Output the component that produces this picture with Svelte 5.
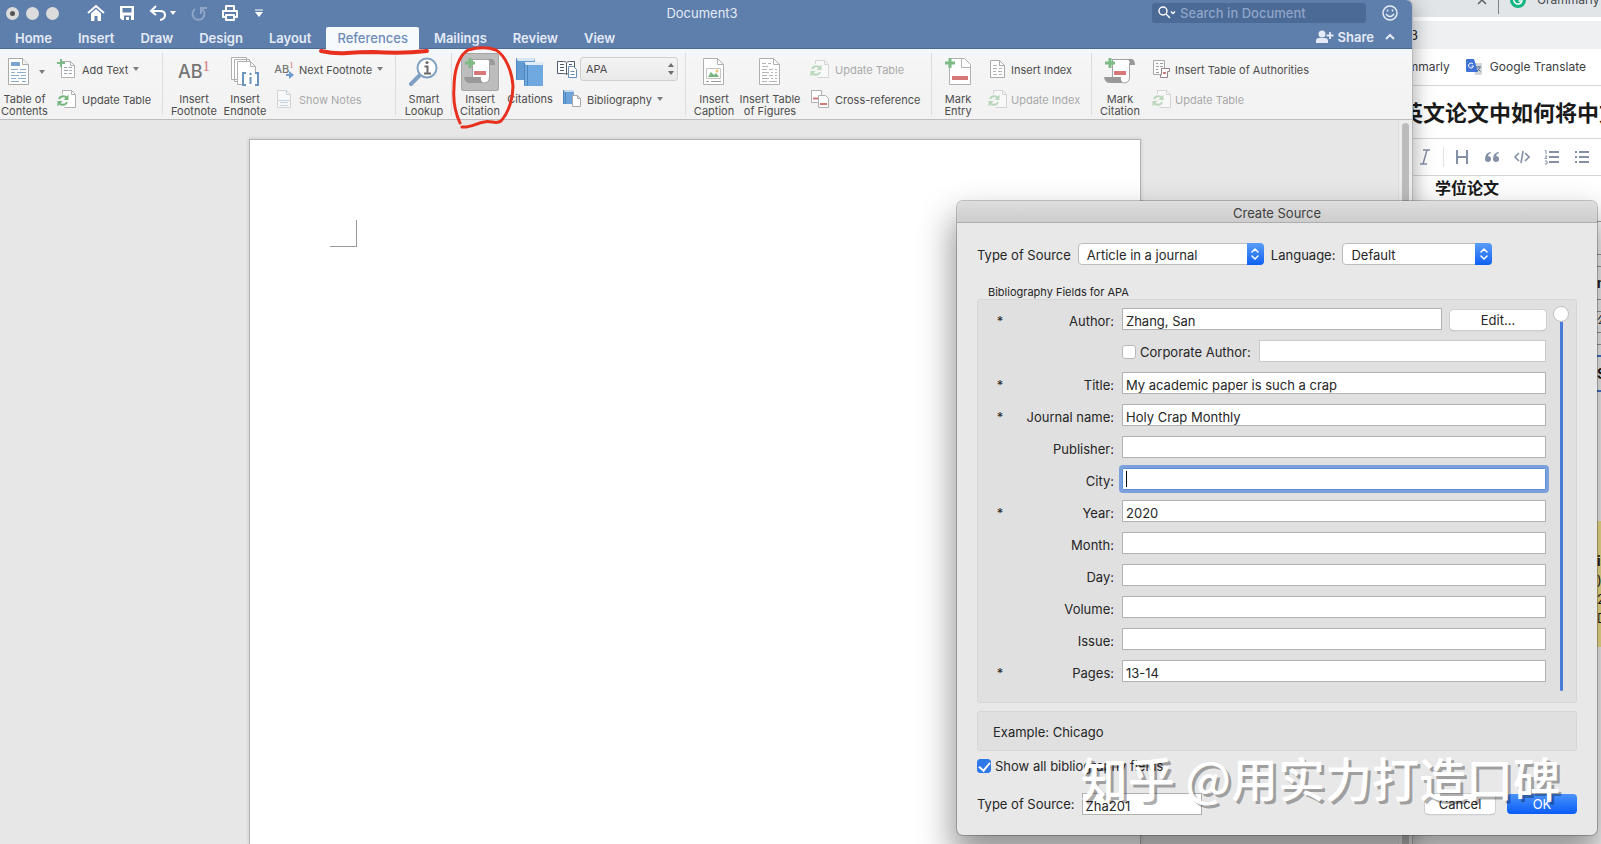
<script lang="ts">
  interface Field {
    id: string
    label: string
    value: string
    required?: boolean
    focused?: boolean
  }

  const tabs = ["Home", "Insert", "Draw", "Design", "Layout", "References", "Mailings", "Review", "View"]

  let activeTab = $state("References")
  let author = $state("Zhang, San")
  let corporate = $state(false)
  let corporateAuthor = $state("")
  let showAll = $state(true)
  let scroll = $state(0)
  let tag = $state("Zha201")

  let fields: Field[] = $state([
    { id: "title", label: "Title", value: "My academic paper is such a crap", required: true },
    { id: "journal", label: "Journal name", value: "Holy Crap Monthly", required: true },
    { id: "publisher", label: "Publisher", value: "" },
    { id: "city", label: "City", value: "", focused: true },
    { id: "year", label: "Year", value: "2020", required: true },
    { id: "month", label: "Month", value: "" },
    { id: "day", label: "Day", value: "" },
    { id: "volume", label: "Volume", value: "" },
    { id: "issue", label: "Issue", value: "" },
    { id: "pages", label: "Pages", value: "13-14", required: true },
  ])
</script>

{#snippet plus(x: number, y: number, s: number)}
  <path
    d="M{x + s} {y}v{s * 2}M{x} {y + s}h{s * 2}"
    fill="none" stroke="#7dbb85" stroke-width={s > 4 ? 3 : 2}
  />
{/snippet}

{#snippet icon(name: string)}
  {#if name === "toc"}
    <svg width="24" height="30" viewBox="0 0 24 30">
      <path d="M1.500 1.500h14l6 6v20h-20z" fill="#fff" stroke="#a9a9a9" />
      <path d="M15.500 1.500v6h6" fill="#f2f2f2" stroke="#a9a9a9" />
      <path d="M4 5h9v4H4z" fill="#79a5cf" />
      <path d="M4 12.500h7M13 12.500h6M4 15.500h4M10 15.500h9M4 18.500h8M14 18.500h5M4 21.500h5M11 21.500h8M4 24.500h8M15 24.500h4" stroke="#8badcb" />
    </svg>
  {:else if name === "addtext"}
    <svg width="20" height="22" viewBox="0 0 20 22">
      <path d="M4.500 3.500h9l4 4v12h-13z" fill="#fff" stroke="#b0b0b0" />
      <path d="M13.500 3.500v4h4" fill="none" stroke="#b0b0b0" />
      <path d="M7 9.500h3M11.500 9.500H15M7 12.500h4M12.500 12.500H15M7 15.500h3M11.500 15.500H15" stroke="#9ba3ab" />
      {@render plus(0, 1, 4)}
    </svg>
  {:else if name === "update"}
    <svg width="20" height="22" viewBox="0 0 20 22">
      <path d="M5.500 6V2.500h9l4 4v13h-11" fill="#fff" stroke="#b0b0b0" />
      <path d="M14.500 2.500v4h4" fill="none" stroke="#b0b0b0" />
      <path d="M2 11c1-3 6-4 8-1M10 14c-1 3-6 4-8 1" fill="none" stroke="#76b67e" stroke-width="2" />
      <path d="M11.500 6.500V12H6.500zM.500 18.500V13h5z" fill="#76b67e" />
    </svg>
  {:else if name === "endnote"}
    <svg width="30" height="30" viewBox="0 0 30 30">
      <path d="M1.500.500h15v22h-15zM4.500 2.500h15v22h-15z" fill="#fff" stroke="#b0b0b0" />
      <path d="M7.500 4.500h13l5 5v18h-18z" fill="#fff" stroke="#b0b0b0" />
      <path d="M20.500 4.500v5h5" fill="none" stroke="#b0b0b0" />
      <path d="M12 15h17v14H12z" fill="#fff" />
      <path d="M16 16h-3v12h3M25 16h3v12h-3M20.500 20v7" fill="none" stroke="#6b94bd" stroke-width="2" />
      <circle cx="20.500" cy="17" r="1.200" fill="#6b94bd" />
    </svg>
  {:else if name === "notes"}
    <svg width="20" height="22" viewBox="0 0 20 22">
      <path d="M3.500 2.500h9l4 4v13h-13z" fill="#fff" stroke="#b0b0b0" />
      <path d="M12.500 2.500v4h4M6 14.500h8M6 17.500h8" fill="none" stroke="#8badcb" />
      <path d="M4 12.500h12" stroke="#8badcb" />
    </svg>
  {:else if name === "lookup"}
    <svg width="30" height="30" viewBox="0 0 30 30">
      <path d="M2 27l9-9" stroke="#7fa0c0" stroke-width="4" stroke-linecap="round" />
      <circle cx="18" cy="11" r="9.500" fill="#fff" stroke="#7fa0c0" stroke-width="2" />
      <path d="M15.500 9.500h3V16M15 16.500h7" fill="none" stroke="#6a6a6a" stroke-width="2" />
      <circle cx="18" cy="5.500" r="1.500" fill="#6a6a6a" />
    </svg>
  {:else if name === "citation"}
    <svg width="34" height="30" viewBox="0 0 34 30">
      <path d="M9 3h17v17q0 6-6 6H9z" fill="#fff" />
      <path d="M9.500 3v18M26.500 6v14q0 6-6 6" fill="none" stroke="#a2a2a2" />
      <path d="M9 2.500h18" stroke="#a2a2a2" />
      <path d="M24 2h5q3 1 3 6h-5q0-5-3-6z" fill="#999" />
      <path d="M1 20h17q-1 4 3 6H7q-5 0-6-6z" fill="#999" />
      <path d="M11 14h12v4H11z" fill="#d67878" />
      {@render plus(2, 1, 5)}
    </svg>
  {:else if name === "books"}
    <svg width="30" height="30" viewBox="0 0 30 30">
      <path d="M1 1h18l1 3v19H1z" fill="#639bd3" />
      <path d="M1 1h18v3H3z" fill="#d8e6f3" />
      <path d="M9 5h18l1 3v21H9z" fill="#70a9df" />
      <path d="M9 5h18l1 3H11z" fill="#e2edf7" />
      <path d="M9.500 5.500v23M1.500 1.500v21M12.500 8v21" fill="none" stroke="#4e86c0" />
    </svg>
  {:else if name === "style"}
    <svg width="22" height="22" viewBox="0 0 22 22">
      <path d="M1.500 3.500h6q2 0 3 1 1-1 3-1h5v12h-6q-1 0-2 1-1-1-3-1h-6z" fill="#fff" stroke="#4d5b6b" />
      <path d="M10.500 5v11M4 6.500h4M4 9.500h4M4 12.500h4M13 6.500h3" stroke="#4d5b6b" />
      <path d="M12.500 8.500h5l3 3v8h-8z" fill="#fff" stroke="#6b8db2" />
      <path d="M14.500 13.500h4M14.500 16.500h4" stroke="#6b8db2" />
    </svg>
  {:else if name === "bibliography"}
    <svg width="20" height="22" viewBox="0 0 20 22">
      <path d="M1 2h11v14H1z" fill="#6ca3d9" />
      <path d="M1 2h11v2H3z" fill="#c5d9ec" />
      <path d="M1.500 2v14M3.500 4v12" stroke="#4e86c0" />
      <path d="M10.500 7.500h5l3 3v8h-8z" fill="#fff" stroke="#a9a9a9" />
      <path d="M15.500 7.500v3h3" fill="none" stroke="#a9a9a9" />
    </svg>
  {:else if name === "caption" || name === "figures"}
    <svg width="24" height="30" viewBox="0 0 24 30">
      <path d="M1.500 1.500h14l6 6v20h-20z" fill="#fff" stroke="#b0b0b0" />
      <path d="M15.500 1.500v6h6" fill="none" stroke="#b0b0b0" />
      {#if name === "caption"}
        <path d="M4.500 11.500h14v10h-14z" fill="#fff" stroke="#c4c4c4" />
        <path d="M6 20l3-5 3 3 2-2 3 4z" fill="#76b67e" />
        <circle cx="15" cy="14" r="1.500" fill="#e9c46a" />
        <path d="M4 24.500h3M9 24.500h10" stroke="#9a9a9a" />
      {:else}
        <path d="M4 6.500h4M10 6.500h3M4 9.500h6M4 12.500h5M11 12.500h4M17 12.500h2M4 15.500h7M13 15.500h2M17 15.500h2M4 18.500h5M11 18.500h4M17 18.500h2M4 21.500h7M13 21.500h2M17 21.500h2M4 24.500h5M11 24.500h8" stroke="#b4b4b4" />
      {/if}
    </svg>
  {:else if name === "crossref"}
    <svg width="20" height="22" viewBox="0 0 20 22">
      <path d="M1.500 2.500h10v12h-10z" fill="#fff" stroke="#b0b0b0" />
      <path d="M3 10.500h7" stroke="#d67878" stroke-width="2" />
      <path d="M8.500 7.500h7l3 3v9h-10z" fill="#fff" stroke="#b0b0b0" />
      <path d="M10 16h7" stroke="#d67878" stroke-width="2" />
    </svg>
  {:else if name === "markentry"}
    <svg width="28" height="30" viewBox="0 0 28 30">
      <path d="M5.500 1.500h15l6 6v20h-21z" fill="#fff" stroke="#b0b0b0" />
      <path d="M17.500 1.500v9h9" fill="none" stroke="#b0b0b0" />
      <path d="M8 19h16v4H8z" fill="#d67878" />
      {@render plus(1, 1, 5)}
    </svg>
  {:else if name === "index"}
    <svg width="20" height="22" viewBox="0 0 20 22">
      <path d="M2.500 2.500h9l5 5v12h-14z" fill="#fff" stroke="#a9a9a9" />
      <path d="M11.500 2.500v5h5" fill="none" stroke="#a9a9a9" />
      <path d="M5 7.500h4M5 10.500h4M11 10.500h3M5 13.500h3M10 13.500h4M5 16.500h4M11 16.500h3" stroke="#b4b4b4" />
    </svg>
  {:else if name === "authorities"}
    <svg width="20" height="22" viewBox="0 0 20 22">
      <path d="M1.500 2.500h11v14h-11z" fill="#fff" stroke="#a9a9a9" />
      <path d="M4 5.500h2M8 5.500h3M4 8.500h3M8 8.500h3M4 11.500h2M4 14.500h3" stroke="#9a9a9a" />
      <path d="M9.500 10.500h8v3h-2v6h-7v-3h1z" fill="#fff" stroke="#96808a" />
      <path d="M11 15h3" stroke="#d67878" stroke-width="2" />
    </svg>
  {/if}
{/snippet}

{#snippet big(name: string, first: string, second: string)}
  <button type="button" class="big {name}">
    <span class="big-icon">
      {#if name === "footnote"}
        <span class="ab">AB<sup>1</sup></span>
      {:else}
        {@render icon(name)}
      {/if}
      {#if name === "toc"}<span class="arrow"></span>{/if}
    </span>
    <span class="big-label">{first}{#if second}<br />{second}{/if}</span>
  </button>
{/snippet}

{#snippet small(name: string, label: string, menu: boolean, disabled: boolean)}
  <button type="button" class="small" {disabled}>
    {#if name === "nextnote"}
      <span class="ab mini">AB<sup>1</sup>
        <svg width="8" height="8" viewBox="0 0 8 8"><path d="M0 3h3V0l5 4-5 4V5H0z" fill="#6f9bd1" /></svg>
      </span>
    {:else}
      {@render icon(name)}
    {/if}
    <span class="small-label">{label}</span>
    {#if menu}<span class="arrow"></span>{/if}
  </button>
{/snippet}

{#snippet stepper()}
  <span class="stepper">
    <svg width="10" height="14" viewBox="0 0 10 14">
      <path d="M2 5l3-3 3 3M2 9l3 3 3-3" fill="none" stroke="#fff" stroke-width="1.500" stroke-linecap="round" stroke-linejoin="round" />
    </svg>
  </span>
{/snippet}

<div class="desktop">
  <section class="browser">
    <div class="strip">
      <svg width="10" height="10" viewBox="0 0 10 10"><path d="M1 1l8 8M9 1L1 9" stroke="#5f6368" stroke-width="1.500" /></svg>
      <span class="strip-sep"></span>
      <svg width="16" height="16" viewBox="0 0 16 16">
        <circle cx="8" cy="8" r="8" fill="#15b582" />
        <path d="M11 5a4.200 4.200 0 1 0 1 4H8.500" fill="none" stroke="#fff" stroke-width="1.500" />
      </svg>
      <span>Grammarly</span>
    </div>
    <div class="address"><span>3</span></div>
    <div class="bookmarks">
      <a href="#grammarly">Grammarly</a>
      <a href="#translate">
        <svg width="16" height="16" viewBox="0 0 16 16">
          <path d="M6 4h9a1 1 0 0 1 1 1v10a1 1 0 0 1-1 1H9z" fill="#d3d6da" />
          <path d="M1 0h7l4 13H1a1 1 0 0 1-1-1V1a1 1 0 0 1 1-1z" fill="#4173d6" />
          <path d="M7 5a2.500 2.500 0 1 0 .500 2H5.500" fill="none" stroke="#fff" />
          <path d="M10 8h5M12.500 7v1M14 8q-1 3-3 4M11.500 9.500l3 3" fill="none" stroke="#5b7090" />
        </svg>
        Google Translate
      </a>
    </div>
    <h1>英文论文中如何将中文</h1>
    <div class="editor-tools">
      <svg width="16" height="16" viewBox="0 0 16 16"><path d="M6 1h7M3 15h7M10 1L6 15" fill="none" stroke="#8590a6" stroke-width="1.500" /></svg>
      <span class="tool-sep"></span>
      <svg width="16" height="16" viewBox="0 0 16 16"><path d="M3 1v14M13 1v14M3 8h10" fill="none" stroke="#8590a6" stroke-width="2" /></svg>
      <svg width="16" height="16" viewBox="0 0 16 16">
        <path d="M6.500 3Q1 4 1 10a3 3 0 1 0 3-3q0-2 3-3zM14.500 3Q9 4 9 10a3 3 0 1 0 3-3q0-2 3-3z" fill="#8590a6" />
      </svg>
      <svg width="16" height="16" viewBox="0 0 16 16"><path d="M5 4L1 8l4 4M11 4l4 4-4 4M9 2L7 14" fill="none" stroke="#8590a6" stroke-width="1.600" /></svg>
      <svg width="16" height="16" viewBox="0 0 16 16"><path d="M5 3h10M5 8h10M5 13h10" stroke="#8590a6" stroke-width="2" /><path d="M1 1.500h1V5M1 7h2L1 9.500h2M1 12h2v3H1" fill="none" stroke="#8590a6" /></svg>
      <svg width="16" height="16" viewBox="0 0 16 16"><path d="M5 3h10M5 8h10M5 13h10M1 3h2M1 8h2M1 13h2" stroke="#8590a6" stroke-width="2" /></svg>
    </div>
    <p class="editor-text">学位论文</p>
    <div class="behind">
      <div class="cell gap"></div>
      <div class="cell head"></div>
      <div class="cell thin"></div>
      <div class="cell bold">n</div>
      <div class="cell thin"></div>
      <div class="cell mid">公</div>
      <div class="cell thin"></div>
      <div class="cell picked">S</div>
      <div class="note"><b>is</b><span>)</span><span>2</span><span>□</span></div>
    </div>
  </section>

  <section class="word">
    <header>
      <div class="title-row">
        <div class="lights"><i class="dirty"></i><i></i><i></i></div>
        <div class="quick">
          <button type="button" aria-label="Home">
            <svg width="18" height="18" viewBox="0 0 18 18"><path d="M1 9l8-7 8 7" fill="none" stroke="#fff" stroke-width="2" /><path d="M4 9.500L9 5l5 4.500V17h-3.500v-5h-3v5H4z" fill="#fff" /></svg>
          </button>
          <button type="button" aria-label="Save">
            <svg width="16" height="16" viewBox="0 0 16 16"><path d="M1 1h14v14H3l-2-2z" fill="#fff" /><path d="M3.500 3h9v4.500h-9zM5 10.500h7V15H5z" fill="#5e7eac" /><path d="M7 12h3v3H7z" fill="#fff" /></svg>
          </button>
          <button type="button" aria-label="Undo">
            <svg width="18" height="16" viewBox="0 0 18 16"><path d="M7 1L2 6l5 4M2 6h9q5 0 5 4t-5 5" fill="none" stroke="#fff" stroke-width="2" /></svg>
            <span class="arrow"></span>
          </button>
          <button type="button" aria-label="Redo" disabled>
            <svg width="17" height="17" viewBox="0 0 17 17"><path d="M5 4a6 6 0 1 0 7 0M11 9V3h6" fill="none" stroke="#8ea5c8" stroke-width="2" /></svg>
          </button>
          <button type="button" aria-label="Print">
            <svg width="18" height="18" viewBox="0 0 18 18"><path d="M5 6V2h8v4M5 13H2V7h14v6h-3M5 11h8v5H5z" fill="none" stroke="#fff" stroke-width="2" stroke-linejoin="round" /></svg>
          </button>
          <button type="button" class="customize" aria-label="Customize toolbar">
            <svg width="8" height="8" viewBox="0 0 8 8"><path d="M0 1h8" stroke="#fff" /><path d="M0 3h8L4 8z" fill="#fff" /></svg>
          </button>
        </div>
        <span class="doc-name">Document3</span>
        <label class="search">
          <svg width="18" height="14" viewBox="0 0 18 14"><circle cx="5" cy="5" r="4" fill="none" stroke="#fff" stroke-width="1.400" /><path d="M8 8l4 4M13 5.500l2 2 2-2" fill="none" stroke="#fff" stroke-width="1.400" /></svg>
          <input type="text" placeholder="Search in Document" aria-label="Search in Document" />
        </label>
        <button type="button" class="smile" aria-label="Feedback">
          <svg width="16" height="16" viewBox="0 0 16 16"><circle cx="8" cy="8" r="7" fill="none" stroke="#e4ebf6" stroke-width="1.500" /><path d="M4 9q4 5 8 0" fill="none" stroke="#e4ebf6" stroke-width="1.500" /><path d="M5.500 4.500v2M10.500 4.500v2" stroke="#e4ebf6" stroke-width="1.500" /></svg>
        </button>
      </div>
      <nav>
        {#each tabs as tab}
          <button type="button" class:active={tab === activeTab} onclick={() => (activeTab = tab)}>{tab}</button>
        {/each}
        <button type="button" class="share">
          <svg width="18" height="14" viewBox="0 0 18 14"><circle cx="6" cy="4" r="3.500" fill="#e4ebf6" /><path d="M0 13V11q0-3 3-3h6q3 0 3 3v2z" fill="#e4ebf6" /><path d="M14 2v7M10.500 5.500h7" stroke="#e4ebf6" stroke-width="1.800" /></svg>
          Share
        </button>
        <button type="button" class="collapse" aria-label="Collapse ribbon">
          <svg width="10" height="8" viewBox="0 0 10 8"><path d="M1 6l4-4 4 4" fill="none" stroke="#e4ebf6" stroke-width="2" /></svg>
        </button>
      </nav>
    </header>

    <div class="ribbon">
      <div class="group g-toc">
        {@render big("toc", "Table of", "Contents")}
        <div class="stack">
          {@render small("addtext", "Add Text", true, false)}
          {@render small("update", "Update Table", false, false)}
        </div>
      </div>
      <div class="group g-notes">
        {@render big("footnote", "Insert", "Footnote")}
        {@render big("endnote", "Insert", "Endnote")}
        <div class="stack">
          {@render small("nextnote", "Next Footnote", true, false)}
          {@render small("notes", "Show Notes", false, true)}
        </div>
      </div>
      <div class="group">
        {@render big("lookup", "Smart", "Lookup")}
      </div>
      <div class="group g-cite">
        {@render big("citation", "Insert", "Citation")}
        {@render big("books", "Citations", "")}
        <div class="stack">
          <label class="style-pick">
            {@render icon("style")}
            <span class="style-box">
              <select aria-label="Citation style"><option>APA</option></select>
              <svg width="6" height="14" viewBox="0 0 6 14"><path d="M0 5l3-4 3 4zM0 9l3 4 3-4z" fill="#6e6e6e" /></svg>
            </span>
          </label>
          <div class="bib">{@render small("bibliography", "Bibliography", true, false)}</div>
        </div>
      </div>
      <div class="group g-caption">
        {@render big("caption", "Insert", "Caption")}
        {@render big("figures", "Insert Table", "of Figures")}
        <div class="stack">
          {@render small("update", "Update Table", false, true)}
          {@render small("crossref", "Cross-reference", false, false)}
        </div>
      </div>
      <div class="group g-index">
        {@render big("markentry", "Mark", "Entry")}
        <div class="stack">
          {@render small("index", "Insert Index", false, false)}
          {@render small("update", "Update Index", false, true)}
        </div>
      </div>
      <div class="group g-auth">
        <div class="plain">{@render big("citation", "Mark", "Citation")}</div>
        <div class="stack">
          {@render small("authorities", "Insert Table of Authorities", false, false)}
          {@render small("update", "Update Table", false, true)}
        </div>
      </div>
    </div>

    <main>
      <div class="page"><span class="margin-mark"></span></div>
      <div class="scrollbar"><span></span></div>
    </main>

    <!-- hand-drawn marks over the ribbon -->
    <svg class="marks" width="220" height="90" viewBox="310 45 220 90" fill="none" stroke="#e8301f" stroke-linecap="round" stroke-linejoin="round">
      <path d="M321 51q14 3 26 2t26-1q30 2 54-1" stroke-width="4" />
      <path d="M460 123C455 112 453 100 454 88C454 72 458 56 468 50C478 47 488 47 496 50C506 56 512 72 513 86C513 98 509 112 501 121C496 125 491 120 484 122C477 123 470 128 462 127" stroke-width="3" />
    </svg>
  </section>

  <form class="dialog" onsubmit={(e) => e.preventDefault()}>
    <h2>Create Source</h2>
    <div class="dialog-body">
      <div class="type-row">
        <label for="source-type">Type of Source</label>
        <span class="pick wide">
          <select id="source-type"><option>Article in a journal</option></select>
          {@render stepper()}
        </span>
        <label for="language">Language:</label>
        <span class="pick">
          <select id="language"><option>Default</option></select>
          {@render stepper()}
        </span>
      </div>

      <div class="caption-text">Bibliography Fields for APA</div>
      <div class="panel">
        <div class="rows">
          <div class="row">
            <span class="star">*</span>
            <label for="author">Author:</label>
            <div class="control">
              <input id="author" type="text" bind:value={author} />
              <button type="button" class="push edit">Edit...</button>
            </div>
          </div>
          <div class="row">
            <span class="star"></span>
            <span></span>
            <div class="control">
              <label class="check"><input type="checkbox" bind:checked={corporate} />Corporate Author:</label>
              <input type="text" class="pale" aria-label="Corporate Author" bind:value={corporateAuthor} />
            </div>
          </div>
          {#each fields as field (field.id)}
            <div class="row">
              <span class="star">{field.required ? "*" : ""}</span>
              <label for={field.id}>{field.label}:</label>
              <div class="control">
                <input id={field.id} type="text" class:focused={field.focused} bind:value={field.value} />
                {#if field.focused}<span class="caret"></span>{/if}
              </div>
            </div>
          {/each}
        </div>
        <input class="slider" type="range" min="0" max="100" aria-label="Scroll fields" bind:value={scroll} />
      </div>

      <div class="panel example">Example: Chicago</div>
      <label class="check show-all"><input type="checkbox" bind:checked={showAll} />Show all bibliography fields</label>
      <div class="footer">
        <label for="tag">Type of Source:</label>
        <input id="tag" type="text" bind:value={tag} />
        <button type="button" class="push cancel">Cancel</button>
        <button type="submit" class="push ok">OK</button>
      </div>
    </div>
    <div class="watermark">知乎 @用实力打造口碑</div>
  </form>
</div>

<style>
  :global(body) {
    margin: 0;
  }

  .desktop {
    position: relative;
    height: 100vh;
    min-height: 840px;
    overflow: hidden;
    background: #fff;
    color: #262626;
    font-family: Inter, "Noto Sans CJK SC", sans-serif;
    font-size: 13px;
    line-height: 16px;
  }

  .desktop * {
    box-sizing: border-box;
  }

  button,
  input,
  select {
    margin: 0;
    padding: 0;
    border: 0;
    background: none;
    color: inherit;
    font: inherit;
  }

  svg {
    display: block;
    flex: none;
  }

  .arrow {
    width: 0;
    border: 3px solid transparent;
    border-top: 4px solid #7d7d7d;
    border-bottom: 0;
  }

  /* browser window, its top edge is off screen */
  .browser {
    position: absolute;
    top: -17px;
    right: 0;
    bottom: 0;
    width: 200px;
    overflow: hidden;
    background: #fff;
    white-space: nowrap;
  }

  .strip {
    display: flex;
    align-items: center;
    height: 34px;
    padding-left: 76px;
    gap: 11px;
    background: #e2e5e8;
    color: #45494d;
    font-size: 12px;
  }

  .strip-sep {
    width: 1px;
    height: 28px;
    background: #7e8387;
  }

  .address {
    height: 28px;
    margin-top: 4px;
    padding: 6px 0 0 9px;
    background: #eff0f2;
  }

  .bookmarks {
    display: flex;
    align-items: center;
    justify-content: flex-end;
    gap: 16px;
    height: 37px;
    padding-right: 15px;
    border-bottom: 1px solid #d5d5d5;
    font-size: 12px;
  }

  .bookmarks a {
    display: flex;
    gap: 8px;
    color: #3c4043;
    text-decoration: none;
  }

  h1 {
    margin: 0;
    height: 53px;
    border-bottom: 1px solid #d5d5d5;
    color: #1a1a1a;
    font-family: "Noto Sans CJK SC", sans-serif;
    font-size: 22px;
    font-weight: 700;
    line-height: 50px;
  }

  .editor-tools {
    display: flex;
    align-items: center;
    gap: 14px;
    height: 37px;
    padding-left: 16px;
    border-bottom: 1px solid #d5d5d5;
  }

  .tool-sep {
    width: 1px;
    height: 20px;
    margin: 0 -4px;
    background: #e2e2e2;
  }

  .editor-text {
    margin: 0;
    padding-left: 34px;
    color: #1a1a1a;
    font-size: 16px;
    font-weight: 700;
    line-height: 24px;
  }

  .behind {
    display: flex;
    flex-direction: column;
    width: 4px;
    margin-left: auto;
    overflow: hidden;
    color: #1a1a1a;
  }

  .cell {
    flex: none;
    height: 33px;
    border-bottom: 1px solid #a0a0a0;
  }

  .cell.gap {
    height: 22px;
  }

  .cell.thin {
    height: 12px;
  }

  .cell.bold {
    font-weight: 700;
    line-height: 32px;
  }

  .cell.mid {
    height: 21px;
    font-size: 11px;
  }

  .cell.picked {
    height: 37px;
    margin-top: 10px;
    border: 2px solid #4a7ad8;
    border-width: 2px 0;
    font-size: 14px;
    font-weight: 700;
    line-height: 33px;
  }

  .note {
    display: flex;
    flex-direction: column;
    gap: 3px;
    height: 126px;
    margin-top: 129px;
    padding-top: 32px;
    background: #ffef98;
  }

  /* word window */
  .word {
    position: absolute;
    inset: 0 189px 0 0;
    display: flex;
    flex-direction: column;
    overflow: hidden;
    border-radius: 0 6px 0 0;
    background: #e7e7e7;
    box-shadow: 0 0 0 1px #b9b9b9, 2px 4px 20px rgb(0 0 0 / 35%);
  }

  header {
    flex: none;
    height: 49px;
    border-bottom: 1px solid #4b6a98;
    background: #5e7eac;
    color: #e4ebf6;
  }

  .title-row {
    display: grid;
    grid-template-columns: 1fr auto 1fr;
    align-items: center;
    height: 26px;
    padding-right: 8px;
  }

  .lights {
    grid-area: 1 / 1;
    display: flex;
    gap: 7px;
    padding-left: 6px;
  }

  .lights i {
    width: 13px;
    height: 13px;
    border-radius: 50%;
    background: #dcdcdc;
  }

  .lights .dirty {
    border: 4px solid #dcdcdc;
    background: #555;
  }

  .quick {
    grid-area: 1 / 1;
    display: flex;
    align-items: center;
    gap: 14px;
    padding-left: 87px;
  }

  .quick button {
    display: flex;
    align-items: center;
    gap: 3px;
  }

  .quick .customize {
    padding-left: 2px;
  }

  .quick .arrow {
    border-top-color: #fff;
  }

  .doc-name {
    grid-column: 2;
  }

  .search {
    grid-area: 1 / 3;
    justify-self: end;
    display: flex;
    align-items: center;
    gap: 4px;
    width: 214px;
    height: 20px;
    margin-right: 38px;
    padding-left: 6px;
    border-radius: 3px;
    background: #4c6a96;
  }

  .search input {
    width: 160px;
    font-weight: 500;
  }

  .search input::placeholder {
    color: #8ea5c8;
    opacity: 1;
  }

  .smile {
    grid-area: 1 / 3;
    justify-self: end;
    margin-right: 6px;
  }

  nav {
    display: flex;
    gap: 4px;
    height: 22px;
    margin-top: 1px;
    padding-left: 4px;
  }

  nav button {
    padding: 0 11px;
    border-radius: 2px 2px 0 0;
    font-weight: 600;
    line-height: 20px;
  }

  nav .active {
    background: #f7fafd;
    color: #6f8bb8;
    font-weight: 500;
  }

  .share {
    display: flex;
    align-items: center;
    gap: 4px;
    height: 19px;
    margin-left: auto;
    padding: 0;
  }

  .collapse {
    height: 19px;
    padding: 0 17px 0 7px;
  }

  .ribbon {
    display: flex;
    flex: none;
    height: 71px;
    border-bottom: 1px solid #bdbdbd;
    background: linear-gradient(#f3f8fc, #f5f5f5 12px, #f2f2f2);
    color: #4d4d4d;
    font-size: 11px;
    line-height: 12px;
    white-space: nowrap;
  }

  .group {
    display: flex;
    flex: none;
    padding-top: 4px;
    background: linear-gradient(#dcdcdc, #dcdcdc) right 4px / 1px 62px no-repeat;
  }

  .g-toc {
    width: 163px;
  }

  .g-notes {
    width: 233px;
    padding-left: 5px;
  }

  .g-cite {
    width: 234px;
  }

  .g-caption {
    width: 246px;
  }

  .g-index {
    width: 160px;
  }

  .g-auth {
    background: none;
  }

  .big {
    display: flex;
    flex-direction: column;
    align-items: center;
    justify-content: flex-start;
    width: 56px;
    gap: 2px;
  }

  .big.toc {
    width: 49px;
  }

  .big.footnote {
    width: 52px;
  }

  .big.endnote {
    width: 50px;
  }

  .big.books {
    width: 44px;
  }

  .big.markentry {
    width: 52px;
  }

  .big-icon {
    display: flex;
    align-items: center;
    justify-content: center;
    width: 38px;
    height: 38px;
    border-radius: 3px;
  }

  .big.toc .big-icon {
    gap: 8px;
    padding-left: 2px;
  }

  .big.citation .big-icon {
    background: #bdbdbd;
    box-shadow: inset 0 0 0 1px #a6a6a6;
  }

  .plain .big.citation .big-icon {
    background: none;
    box-shadow: none;
  }

  .ab {
    color: #757575;
    font-size: 18px;
    font-weight: 500;
    line-height: 30px;
  }

  .ab sup {
    color: #d67878;
    font-family: "Liberation Serif", serif;
    font-size: 15px;
    line-height: 0;
  }

  .ab.mini {
    position: relative;
    width: 20px;
    font-size: 11px;
    line-height: 20px;
  }

  .mini sup {
    font-size: 9px;
  }

  .mini svg {
    position: absolute;
    right: 0;
    bottom: 0;
  }

  .stack {
    display: flex;
    flex-direction: column;
    gap: 6px;
    padding: 4px 0 0 8px;
  }

  .g-notes .stack,
  .g-cite .stack,
  .g-index .stack,
  .g-auth .stack {
    padding-left: 4px;
  }

  .g-caption .stack {
    padding-left: 12px;
  }

  .small {
    display: flex;
    align-items: center;
    gap: 5px;
    height: 24px;
  }

  .small-label {
    padding-top: 1px;
  }

  .g-index .small,
  .g-auth .small {
    gap: 3px;
  }

  .small:disabled {
    opacity: 0.45;
  }

  .bib {
    padding-left: 6px;
  }

  .style-pick {
    display: flex;
    align-items: center;
    gap: 2px;
    height: 24px;
  }

  .style-box {
    position: relative;
  }

  .style-box select {
    width: 98px;
    height: 24px;
    padding-left: 5px;
    border: 1px solid #cfcfcf;
    border-radius: 3px;
    appearance: none;
    background: linear-gradient(#f4f4f4, #e9e9e9);
  }

  .style-box svg {
    position: absolute;
    top: 5px;
    right: 4px;
    pointer-events: none;
  }

  main {
    display: flex;
    flex: 1;
  }

  .page {
    flex: 1;
    margin: 19px 257px 0 249px;
    padding: 80px;
    border: 1px solid #b3b3b3;
    border-bottom: 0;
    background: #fff;
    box-shadow: 0 0 4px rgb(0 0 0 / 15%);
  }

  .margin-mark {
    display: block;
    width: 27px;
    height: 27px;
    border: 1px solid #9a9a9a;
    border-width: 0 1px 1px 0;
  }

  .scrollbar {
    width: 14px;
    padding: 3px 3px 0;
    border-left: 1px solid #dedede;
    background: #ececec;
  }

  .scrollbar span {
    display: block;
    height: 100%;
    border-radius: 4px 4px 0 0;
    background: #bcbcbc;
  }

  .marks {
    position: absolute;
    top: 45px;
    left: 310px;
    pointer-events: none;
  }

  /* dialog */
  .dialog {
    position: absolute;
    top: 201px;
    right: 4px;
    width: 640px;
    border-radius: 6px;
    background: #e8e8e8;
    box-shadow: 0 0 0 1px rgb(0 0 0 / 22%), 0 20px 34px 4px rgb(0 0 0 / 42%);
  }

  h2 {
    height: 22px;
    margin: 0;
    border-bottom: 1px solid #adadad;
    border-radius: 6px 6px 0 0;
    background: linear-gradient(#dedede, #cdcdcd);
    color: #404040;
    font-size: 13px;
    font-weight: 400;
    line-height: 24px;
    text-align: center;
  }

  .dialog-body {
    padding: 20px;
  }

  .type-row {
    display: flex;
    align-items: center;
    gap: 7px;
  }

  .type-row label {
    padding-top: 1px;
  }

  .pick {
    position: relative;
    width: 150px;
  }

  .pick.wide {
    width: 186px;
  }

  .pick select {
    width: 100%;
    height: 22px;
    padding: 1px 0 0 8px;
    border: 1px solid #bcbcbc;
    border-radius: 4px;
    appearance: none;
    background: #fff;
  }

  .stepper {
    position: absolute;
    top: 0;
    right: 0;
    display: flex;
    align-items: center;
    justify-content: center;
    width: 17px;
    height: 22px;
    border-radius: 0 4px 4px 0;
    background: linear-gradient(#5a9df8, #0f60f3);
    pointer-events: none;
  }

  .caption-text {
    padding: 21px 0 0 11px;
    font-size: 11px;
    line-height: 13px;
  }

  .panel {
    display: flex;
    border: 1px solid #d6d6d6;
    border-radius: 3px;
    background: #e0e0e0;
  }

  .rows {
    display: flex;
    flex: 1;
    flex-direction: column;
    gap: 10px;
    padding: 8px 0 20px;
  }

  .row {
    display: grid;
    grid-template-columns: 44px 92px 1fr;
    align-items: center;
    height: 22px;
  }

  .row > label,
  .star {
    padding-top: 3px;
    text-align: right;
  }

  .star {
    text-align: center;
  }

  .control {
    position: relative;
    display: flex;
    align-items: center;
    gap: 8px;
    padding-left: 8px;
  }

  input[type="text"] {
    min-width: 0;
  }

  .control input[type="text"],
  .footer input {
    flex: 1;
    height: 22px;
    padding: 3px 3px 0;
    border: 1px solid #b1b1b1;
    background: #fff;
  }

  .control input.pale[type="text"] {
    border-color: #cacaca;
  }

  .control input.focused[type="text"] {
    border-color: #5b8fd8;
    outline: 3px solid #7ba0dc;
    outline-offset: 0;
    border-radius: 1px;
  }

  .caret {
    position: absolute;
    top: 3px;
    left: 12px;
    width: 1px;
    height: 16px;
    background: #000;
  }

  .push {
    height: 20px;
    border-radius: 4px;
    background: #fff;
    box-shadow: 0 0 0 1px #cfcfcf, 0 1px 1px #9a9a9a;
    text-align: center;
  }

  .edit {
    align-self: flex-end;
    width: 96px;
  }

  .check {
    display: flex;
    align-items: center;
    gap: 4px;
  }

  .control .check {
    padding-top: 2px;
  }

  input[type="checkbox"] {
    width: 14px;
    height: 14px;
    border: 1px solid #bababa;
    border-radius: 3px;
    appearance: none;
    background: #fff;
  }

  input[type="checkbox"]:checked {
    border-color: #2f78e8;
    background: #2f78e8;
  }

  input[type="checkbox"]:checked::after {
    content: "";
    display: block;
    width: 5px;
    height: 9px;
    margin: 0 auto;
    border: solid #fff;
    border-width: 0 2px 2px 0;
    transform: rotate(40deg);
  }

  .slider {
    width: 30px;
    margin: 6px 0 11px;
    appearance: none;
    writing-mode: vertical-lr;
  }

  .slider::-webkit-slider-runnable-track {
    width: 3px;
    border-radius: 2px;
    background: #4a7bd9;
  }

  .slider::-webkit-slider-thumb {
    width: 16px;
    height: 16px;
    margin-left: -7px;
    border: 1px solid #c2c2c2;
    border-radius: 50%;
    appearance: none;
    background: #fff;
  }

  .example {
    margin-top: 8px;
    padding: 12px 15px 10px;
  }

  .show-all {
    margin-top: 7px;
  }

  .footer {
    display: flex;
    align-items: center;
    margin-top: 19px;
  }

  .footer input {
    flex: none;
    width: 120px;
    margin-left: 7px;
  }

  .cancel {
    width: 70px;
    margin-left: auto;
  }

  .ok {
    width: 70px;
    margin-left: 12px;
    background: linear-gradient(#4b93fb, #0a5cf5);
    box-shadow: none;
    color: #fff;
  }

  .watermark {
    position: absolute;
    right: 37px;
    bottom: 28px;
    color: #fff;
    font-family: "Noto Sans CJK SC", sans-serif;
    font-size: 47px;
    font-weight: 500;
    line-height: 60px;
    text-shadow: 3px 3px 0 rgb(0 0 0 / 32%);
    white-space: nowrap;
    pointer-events: none;
  }
</style>
